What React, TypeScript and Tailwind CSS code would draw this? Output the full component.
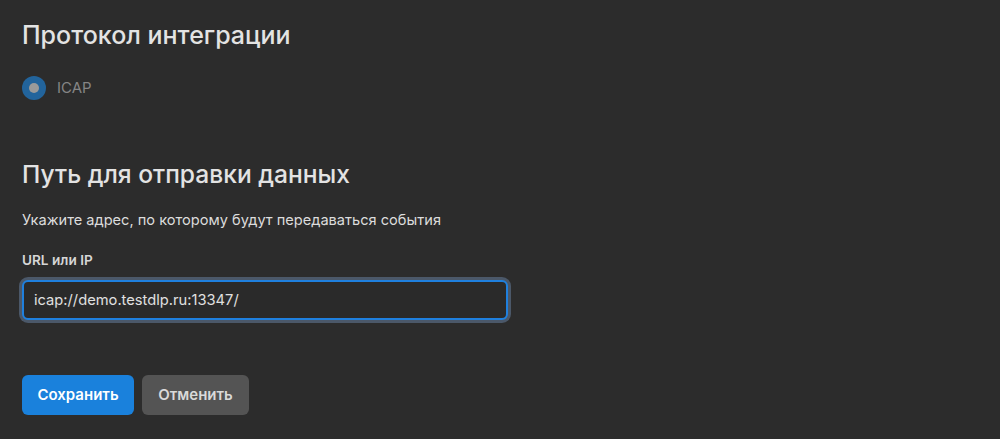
export default function App() {
  return (
    <div
      className="min-h-[439px] w-full bg-[#2c2c2c] px-[22px] pt-[19px] text-[#e3e3e3]"
      style={{ fontFamily: "Inter, 'Noto Sans', sans-serif" }}
    >
      <h1 className="text-[25px] font-medium leading-[32px]">Протокол интеграции</h1>

      <label className="mt-[25px] flex items-center gap-[11px]">
        <span className="flex h-[24px] w-[24px] items-center justify-center rounded-full bg-[#22649c]">
          <span className="h-[10px] w-[10px] rounded-full bg-[#9a9a9a]" />
        </span>
        <span className="text-[15px] text-[#858585]">ICAP</span>
      </label>

      <h2 className="mt-[58px] text-[24.6px] font-medium leading-[32px]">Путь для отправки данных</h2>

      <p className="mt-[20px] text-[14.6px] leading-[20px] text-[#dcdcdc]">
        Укажите адрес, по которому будут передаваться события
      </p>

      <div className="mt-[20px] text-[13.6px] font-semibold leading-[20px] text-[#d6d6d6]">URL или IP</div>

      <input
        readOnly
        value="icap://demo.testdlp.ru:13347/"
        className="mt-[10px] h-[40px] w-[486px] rounded-[6px] border-2 border-[#1f80de] bg-[#2a2a2a] px-[10px] text-[14.7px] text-[#e0e0e0] outline-none ring-[3px] ring-[#4b5869]"
        style={{ fontFamily: "Inter, 'Noto Sans', sans-serif" }}
      />

      <div className="mt-[55px] flex gap-[8px]">
        <button className="h-[40px] w-[112px] rounded-[6px] bg-[#1a81dc] text-[15px] font-semibold text-white">
          Сохранить
        </button>
        <button className="h-[40px] w-[107px] rounded-[6px] bg-[#545454] text-[15px] font-semibold text-[#d9d9d9]">
          Отменить
        </button>
      </div>
    </div>
  );
}
